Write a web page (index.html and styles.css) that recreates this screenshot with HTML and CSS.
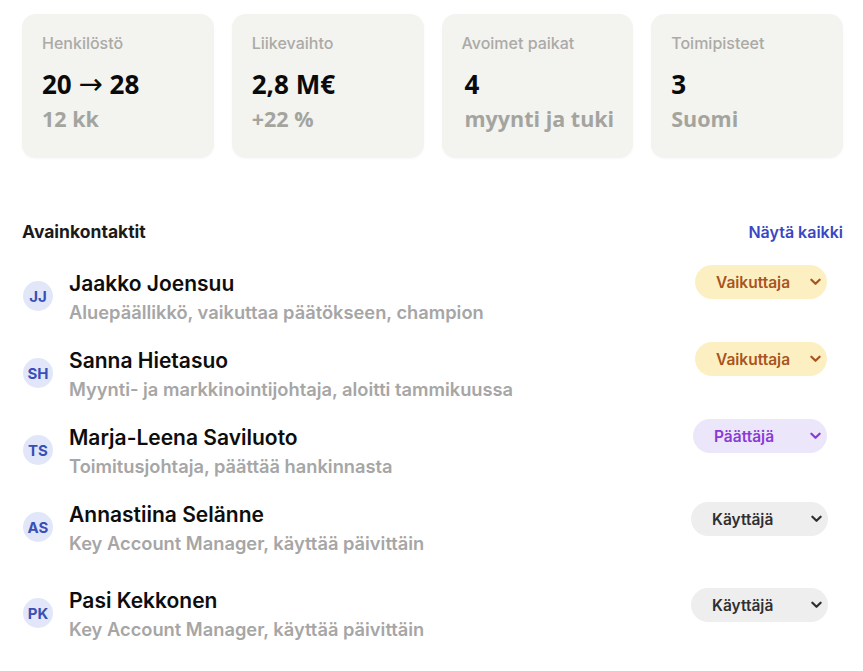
FILE: index.html
```html
<!DOCTYPE html>
<html lang="fi">
<head>
<meta charset="utf-8">
<link rel="stylesheet" href="styles.css">
</head>
<body>
<main class="page">
  <section class="stats">
    <div class="card">
      <div class="card-label">Henkilöstö</div>
      <div class="card-value">20 <span class="arrow">→</span> 28</div>
      <div class="card-sub">12 kk</div>
    </div>
    <div class="card">
      <div class="card-label">Liikevaihto</div>
      <div class="card-value">2,8 M€</div>
      <div class="card-sub">+22 %</div>
    </div>
    <div class="card">
      <div class="card-label">Avoimet paikat</div>
      <div class="card-value card-value-shift">4</div>
      <div class="card-sub card-value-shift">myynti ja tuki</div>
    </div>
    <div class="card">
      <div class="card-label">Toimipisteet</div>
      <div class="card-value">3</div>
      <div class="card-sub">Suomi</div>
    </div>
  </section>

  <section class="contacts">
    <div class="contacts-head">
      <h2 class="contacts-title">Avainkontaktit</h2>
      <a class="contacts-link" href="#">Näytä kaikki</a>
    </div>

    <ul class="contact-list">
      <li class="contact">
        <span class="avatar">JJ</span>
        <div class="contact-text">
          <div class="contact-name">Jaakko Joensuu</div>
          <div class="contact-role">Aluepäällikkö, vaikuttaa päätökseen, champion</div>
        </div>
        <span class="pill pill-influencer">Vaikuttaja<svg class="chev" viewBox="0 0 12 8" width="11" height="8"><path d="M1.5 1.5 6 6l4.5-4.5" fill="none" stroke="currentColor" stroke-width="2.4" stroke-linecap="round" stroke-linejoin="round"/></svg></span>
      </li>
      <li class="contact">
        <span class="avatar">SH</span>
        <div class="contact-text">
          <div class="contact-name">Sanna Hietasuo</div>
          <div class="contact-role">Myynti- ja markkinointijohtaja, aloitti tammikuussa</div>
        </div>
        <span class="pill pill-influencer">Vaikuttaja<svg class="chev" viewBox="0 0 12 8" width="11" height="8"><path d="M1.5 1.5 6 6l4.5-4.5" fill="none" stroke="currentColor" stroke-width="2.4" stroke-linecap="round" stroke-linejoin="round"/></svg></span>
      </li>
      <li class="contact">
        <span class="avatar">TS</span>
        <div class="contact-text">
          <div class="contact-name">Marja-Leena Saviluoto</div>
          <div class="contact-role">Toimitusjohtaja, päättää hankinnasta</div>
        </div>
        <span class="pill pill-decider">Päättäjä<svg class="chev" viewBox="0 0 12 8" width="11" height="8"><path d="M1.5 1.5 6 6l4.5-4.5" fill="none" stroke="currentColor" stroke-width="2.4" stroke-linecap="round" stroke-linejoin="round"/></svg></span>
      </li>
      <li class="contact">
        <span class="avatar">AS</span>
        <div class="contact-text">
          <div class="contact-name">Annastiina Selänne</div>
          <div class="contact-role">Key Account Manager, käyttää päivittäin</div>
        </div>
        <span class="pill pill-user">Käyttäjä<svg class="chev" viewBox="0 0 12 8" width="11" height="8"><path d="M1.5 1.5 6 6l4.5-4.5" fill="none" stroke="currentColor" stroke-width="2.4" stroke-linecap="round" stroke-linejoin="round"/></svg></span>
      </li>
      <li class="contact contact-spaced">
        <span class="avatar">PK</span>
        <div class="contact-text">
          <div class="contact-name">Pasi Kekkonen</div>
          <div class="contact-role">Key Account Manager, käyttää päivittäin</div>
        </div>
        <span class="pill pill-user">Käyttäjä<svg class="chev" viewBox="0 0 12 8" width="11" height="8"><path d="M1.5 1.5 6 6l4.5-4.5" fill="none" stroke="currentColor" stroke-width="2.4" stroke-linecap="round" stroke-linejoin="round"/></svg></span>
      </li>
    </ul>
  </section>
</main>
</body>
</html>
```

FILE: styles.css
```css
* { box-sizing: border-box; }

html, body {
  margin: 0;
  background: #ffffff;
}

body {
  font-family: Inter, "Noto Sans", sans-serif;
  color: #111111;
}

.page {
  padding: 14px 20px 0 22px;
}

/* stats */
.stats {
  display: grid;
  grid-template-columns: repeat(4, 1fr);
  gap: 18px;
}

.card {
  height: 144px;
  background: #f3f3f0;
  border-radius: 14px;
  padding: 20px 8px 0 20px;
  box-shadow: 0 1px 3px rgba(0, 0, 0, 0.03);
}

.card-label {
  font-family: Inter, sans-serif;
  font-size: 16px;
  font-weight: 500;
  line-height: 18px;
  color: #abaaa6;
}

.card-value {
  margin-top: 16px;
  font-family: "Open Sans", sans-serif;
  font-weight: 700;
  font-size: 26px;
  line-height: 32px;
  color: #0a0a0a;
  white-space: nowrap;
}

.arrow {
  font-family: "DejaVu Sans", sans-serif;
  font-weight: 400;
  font-size: 29px;
  line-height: 1;
}

.card-value-shift {
  padding-left: 3px;
}

.card-sub {
  margin-top: 5px;
  font-family: "Open Sans", sans-serif;
  font-weight: 700;
  font-size: 21.5px;
  line-height: 28px;
  color: #a4a49f;
  white-space: nowrap;
}

/* contacts */
.contacts {
  margin-top: 64px;
}

.contacts-head {
  display: flex;
  justify-content: space-between;
  align-items: center;
}

.contacts-title {
  margin: 0;
  font-size: 17.5px;
  line-height: 20px;
  font-weight: 700;
  color: #1b1b1b;
}

.contacts-link {
  font-size: 16px;
  line-height: 20px;
  font-weight: 600;
  color: #3b47c2;
  text-decoration: none;
}

.contact-list {
  list-style: none;
  margin: 23px 0 0;
  padding: 0;
  display: flex;
  flex-direction: column;
  gap: 19px;
}

.contact {
  display: flex;
  align-items: flex-start;
}

.contact-spaced {
  margin-top: 9px;
}

.avatar {
  flex: none;
  width: 30px;
  height: 30px;
  margin-top: 16px;
  margin-left: 1px;
  margin-right: 16px;
  border-radius: 50%;
  background: #e1e7f9;
  color: #3a4fb5;
  font-size: 15px;
  font-weight: 700;
  display: flex;
  align-items: center;
  justify-content: center;
}

.contact-text {
  flex: 1;
  padding-top: 6px;
}

.contact-name {
  font-size: 21px;
  line-height: 26px;
  font-weight: 600;
  color: #0d0d0d;
}

.contact-role {
  margin-top: 4px;
  font-size: 18.3px;
  line-height: 22px;
  font-weight: 600;
  color: #a6a6a6;
}

.pill {
  flex: none;
  width: 132px;
  height: 34px;
  margin-right: 16px;
  border-radius: 17px;
  padding: 0 6px 0 21px;
  display: flex;
  align-items: center;
  justify-content: space-between;
  font-size: 15.5px;
  font-weight: 600;
}

.chev {
  display: block;
}

.pill-influencer {
  background: #fcf0c2;
  color: #a9531f;
}

.pill-decider {
  width: 134px;
  background: #ece6fb;
  color: #8a3ad6;
}

.pill-user {
  width: 137px;
  margin-top: 6px;
  margin-right: 15px;
  background: #eeeeef;
  color: #2f2f33;
}
```
